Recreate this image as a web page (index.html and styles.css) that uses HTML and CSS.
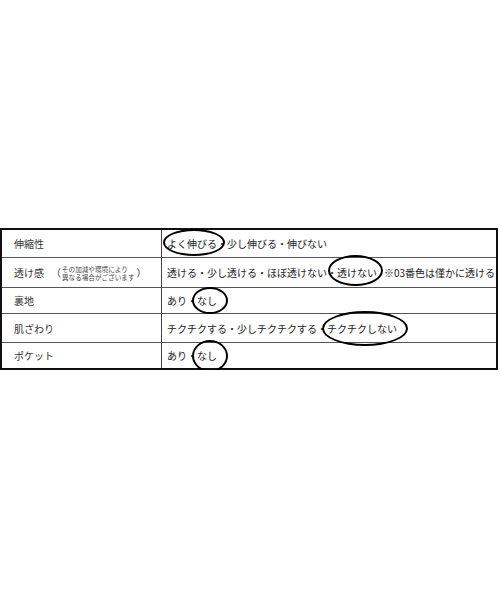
FILE: index.html
```html
<!DOCTYPE html>
<html lang="ja">
<head>
<meta charset="utf-8">
<link rel="stylesheet" href="styles.css">
</head>
<body>
<table class="spec">
  <colgroup><col class="col-label"><col class="col-value"></colgroup>
  <tr class="r1">
    <th>伸縮性</th>
    <td><span class="circ c1">よく伸びる</span>・少し伸びる・伸びない</td>
  </tr>
  <tr class="r2">
    <th><div class="lbl"><span>透け感</span><span class="paren">（</span><span class="note"><span class="nl">その加減や環境により</span><span class="nl">異なる場合がございます</span></span><span class="paren close">）</span></div></th>
    <td>透ける・少し透ける・ほぼ透けない・<span class="circ c2">透けない</span><span class="rem">※03番色は僅かに透ける</span></td>
  </tr>
  <tr class="r3">
    <th>裏地</th>
    <td>あり・<span class="circ c3">なし</span></td>
  </tr>
  <tr class="r4">
    <th>肌ざわり</th>
    <td>チクチクする・少しチクチクする・<span class="circ c4">チクチクしない</span></td>
  </tr>
  <tr class="r5">
    <th>ポケット</th>
    <td>あり・<span class="circ c5">なし</span></td>
  </tr>
</table>
</body>
</html>
```
FILE: styles.css
```css
html, body {
  margin: 0;
  padding: 0;
  background: #fff;
}
body {
  font-family: "Noto Sans CJK JP", "Noto Sans", sans-serif;
  font-size: 10px;
  color: #222;
}
.spec {
  margin-top: 228px;
  width: 498px;
  table-layout: fixed;
  border-collapse: separate;
  border-spacing: 0;
  border: 2px solid #111;
}
.col-label { width: 160px; }
.spec th, .spec td {
  box-sizing: border-box;
  padding: 0;
  border-bottom: 1px solid #555;
  text-align: left;
  font-weight: normal;
  white-space: nowrap;
  vertical-align: middle;
}
.spec th {
  padding-left: 12px;
  border-right: 1px solid #444;
  color: #333;
}
.spec td {
  padding-left: 5px;
}
.r1 th, .r1 td { height: 28px; }
.r2 th, .r2 td { height: 30px; }
.r3 th, .r3 td { height: 26px; }
.r4 th, .r4 td { height: 29px; }
.r5 th, .r5 td { height: 25px; border-bottom: none; }

.lbl {
  display: flex;
  align-items: center;
}
.paren {
  margin-left: 7px;
}
.paren.close {
  margin-left: 2px;
}
.note {
  display: flex;
  flex-direction: column;
  font-size: 6.6px;
  color: #444;
  margin-left: 1px;
}
.nl {
  display: block;
  line-height: 8px;
  height: 8px;
}
.rem {
  margin-left: 7px;
}

.circ {
  position: relative;
}
.circ::before {
  content: "";
  position: absolute;
  border: 2px solid #000;
  border-radius: 50%;
}
.c1::before { left: -4px; right: -8px; top: -7px; bottom: -5px; }
.c2::before { left: -9px; right: -6px; top: -10px; bottom: -6px; }
.c3::before { left: -5px; right: -11px; top: -6px; bottom: -6px; }
.c4::before { left: -5px; right: -11px; top: -10px; bottom: -10px; }
.c5::before { left: -5px; right: -11px; top: -8px; bottom: -9px; }
```
